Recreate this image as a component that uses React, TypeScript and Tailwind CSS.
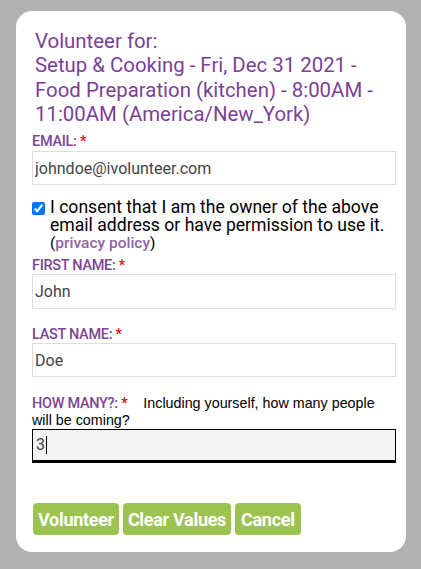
export default function App() {
  return (
    <div className="min-h-screen bg-[#b1b1b1] pl-4 pr-[15px] pt-[11px] pb-[17px] font-['Roboto',sans-serif]">
      <div className="rounded-[16px] bg-white pl-4 pr-[10px] pt-[18px] pb-[17px]">
        {/* Heading */}
        <h1 className="ml-[3px] text-[20.4px] leading-[24.3px] text-[#7b3f98]">
          Volunteer for:
          <br />
          Setup &amp; Cooking - Fri, Dec 31 2021 - Food Preparation (kitchen) - 8:00AM - 11:00AM (America/New_York)
        </h1>

        <form className="mt-[8px]">
          <label className="block text-[14.5px] leading-[16px] font-medium tracking-[-0.3px] text-[#7c4597]">
            EMAIL: <span className="text-[#ff0000]">*</span>
          </label>
          <input
            type="text"
            defaultValue="johndoe@ivolunteer.com"
            className="mt-[1px] block h-[34px] w-full border border-[#dddddd] px-[2px] text-[16px] text-[#444444] outline-none"
          />

          <div className="mt-[13px] flex items-start gap-[5px]">
            <input type="checkbox" defaultChecked className="mt-[4px] h-[13px] w-[13px] shrink-0 accent-[#0075ff]" />
            <div className="text-[17.6px] leading-[18px] text-black">
              I consent that I am the owner of the above email address or have permission to use it.
              <div className="text-[15.5px] leading-[18px]">
                (<a className="font-medium text-[#9263a9]">privacy policy</a>)
              </div>
            </div>
          </div>

          <label className="mt-[6px] block text-[14.5px] leading-[16px] font-medium tracking-[-0.3px] text-[#7c4597]">
            FIRST NAME: <span className="text-[#ff0000]">*</span>
          </label>
          <input
            type="text"
            defaultValue="John"
            className="block h-[35px] w-full border border-[#dddddd] px-[2px] text-[16px] text-[#444444] outline-none"
          />

          <label className="mt-[18px] block text-[14.5px] leading-[16px] font-medium tracking-[-0.3px] text-[#7c4597]">
            LAST NAME: <span className="text-[#ff0000]">*</span>
          </label>
          <input
            type="text"
            defaultValue="Doe"
            className="block h-[34px] w-full border border-[#dddddd] px-[2px] text-[16px] text-[#444444] outline-none"
          />

          <div className="mt-[18px] text-[14.3px] leading-[17px] text-black font-['Liberation_Sans',Arial,sans-serif]">
            <span className="font-['Roboto',sans-serif] text-[14.5px] font-medium tracking-[-0.3px] text-[#7c4597]">
              HOW MANY?: <span className="text-[#ff0000]">*</span>
            </span>
            <span className="ml-[16px]">Including yourself, how many people will be coming?</span>
          </div>
          <div className="flex h-[34px] items-center border border-b-[3px] border-black bg-[#f3f3f3] pl-[3px] text-[16px] text-[#444444]">
            3<span className="ml-[1px] inline-block h-[18px] w-px bg-black" />
          </div>

          <div className="mt-[40px] flex gap-[4px] pl-[1px]">
            <button type="button" className="h-[32px] rounded-[4px] bg-[#9dc34f] px-[5px] text-[18px] font-bold tracking-[-0.3px] text-white">
              Volunteer
            </button>
            <button type="button" className="h-[32px] rounded-[4px] bg-[#9dc34f] px-[5px] text-[18px] font-bold tracking-[-0.3px] text-white">
              Clear Values
            </button>
            <button type="button" className="h-[32px] rounded-[4px] bg-[#9dc34f] px-[6px] text-[18px] font-bold tracking-[-0.3px] text-white">
              Cancel
            </button>
          </div>
        </form>
      </div>
    </div>
  )
}
